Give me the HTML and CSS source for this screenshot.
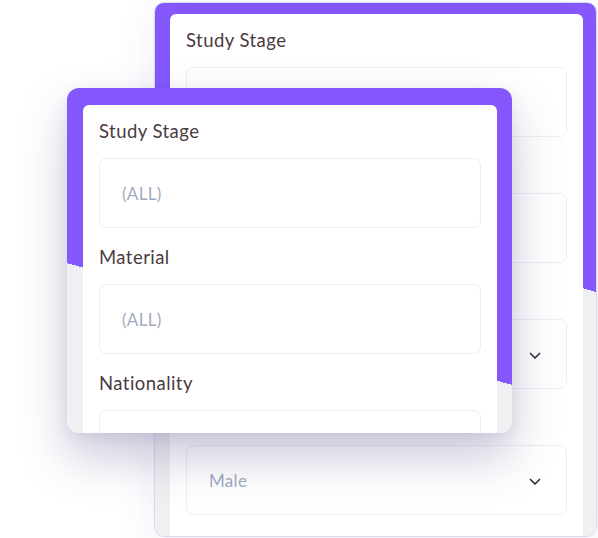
FILE: index.html
```html
<!DOCTYPE html>
<html>
<head>
<meta charset="utf-8">
<link rel="stylesheet" href="styles.css">
</head>
<body>
<div class="stage">
  <div class="card card-back">
    <div class="sheet">
      <div class="field"><div class="label">Study Stage</div><div class="select"></div></div>
      <div class="field"><div class="label">Material</div><div class="select"></div></div>
      <div class="field"><div class="label">Nationality</div><div class="select"><span class="val"></span><svg class="chev" width="12" height="8" viewBox="0 0 12 8"><path d="M1.5 1.5 L6 6 L10.5 1.5" fill="none" stroke="#3d2f36" stroke-width="1.7" stroke-linecap="round" stroke-linejoin="round"/></svg></div></div>
      <div class="field"><div class="label">Gender</div><div class="select"><span class="val">Male</span><svg class="chev" width="12" height="8" viewBox="0 0 12 8"><path d="M1.5 1.5 L6 6 L10.5 1.5" fill="none" stroke="#3d2f36" stroke-width="1.7" stroke-linecap="round" stroke-linejoin="round"/></svg></div></div>
    </div>
  </div>
  <div class="card card-front">
    <div class="sheet">
      <div class="field"><div class="label">Study Stage</div><div class="select"><span class="val">(ALL)</span></div></div>
      <div class="field"><div class="label">Material</div><div class="select"><span class="val">(ALL)</span></div></div>
      <div class="field"><div class="label">Nationality</div><div class="select"></div></div>
    </div>
  </div>
</div>
</body>
</html>
```
FILE: styles.css
```css
html, body {
  margin: 0;
  padding: 0;
  background: #ffffff;
}
body {
  width: 598px;
  height: 538px;
  overflow: hidden;
  font-family: Lato, "Open Sans", "DejaVu Sans", sans-serif;
}
.stage {
  position: relative;
  width: 598px;
  height: 538px;
  padding: 2px 0 0 154px;
  box-sizing: border-box;
}
.card {
  display: flex;
  flex-direction: column;
  box-sizing: border-box;
  overflow: hidden;
}
.card-back {
  width: 443px;
  height: 535px;
  border: 1px solid #dcdaf3;
  border-radius: 10px;
  padding: 11px 13px 0 15px;
  background: linear-gradient(195.3deg, #8458fd 44.2%, #f0f0f2 44.2%);
  box-shadow: 0 8px 40px rgba(70, 60, 140, 0.09);
}
.card-front {
  position: absolute;
  left: 67px;
  top: 88px;
  width: 445px;
  height: 345px;
  border-radius: 12px;
  padding: 17px 15px 0 16px;
  background: linear-gradient(195.3deg, #8458fd 63.6%, #f0f0f2 63.6%);
  box-shadow: 0 24px 48px rgba(55, 45, 115, 0.26), 0 4px 14px rgba(60, 50, 120, 0.08);
}
.sheet {
  flex: 1;
  background: #ffffff;
  border-radius: 6px 6px 0 0;
  padding: 15px 16px 0 16px;
  overflow: hidden;
}
.field {
  display: flex;
  flex-direction: column;
}
.label {
  font-size: 18.5px;
  letter-spacing: 0.45px;
  line-height: 22px;
  height: 22px;
  color: #4a3b40;
  margin-bottom: 16px;
}
.select {
  height: 70px;
  box-sizing: border-box;
  border: 1.5px solid #eeeef0;
  border-radius: 7px;
  margin-bottom: 18px;
  display: flex;
  align-items: center;
  justify-content: space-between;
  padding: 0 25px 0 22px;
}
.val {
  font-size: 17px;
  letter-spacing: 0.3px;
  color: #a2aabf;
}
.chev {
  display: block;
  margin-top: 3px;
}
```
